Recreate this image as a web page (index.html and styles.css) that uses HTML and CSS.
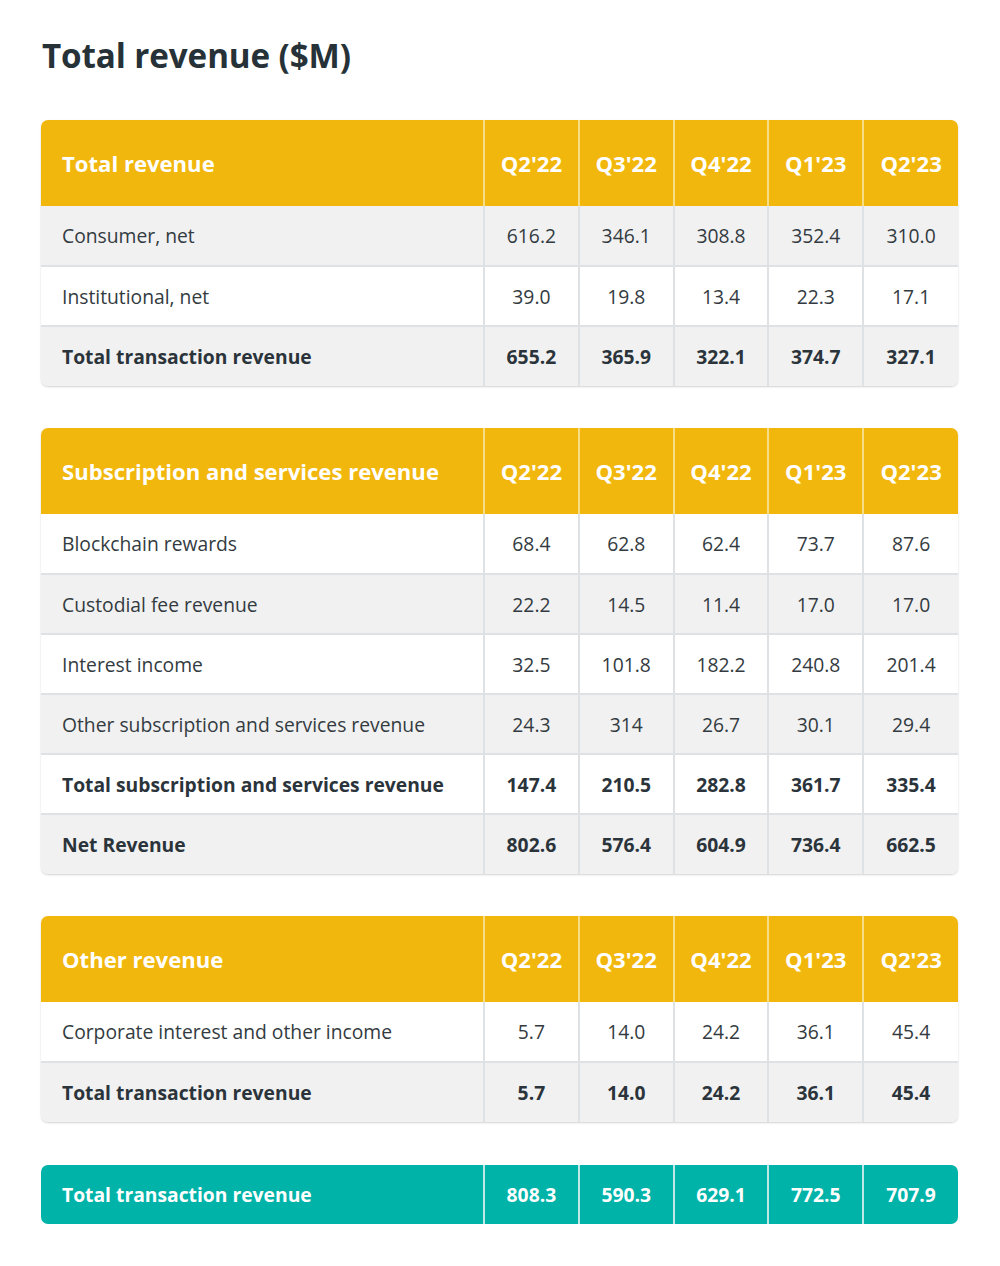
FILE: index.html
```html
<!DOCTYPE html>
<html>
<head>
<meta charset="utf-8">
<link rel="stylesheet" href="styles.css">
</head>
<body>
<div class="page">
  <h1 class="title">Total revenue ($M)</h1>

  <div class="card">
    <table class="rev">
      <colgroup><col class="c-label"><col><col><col><col><col></colgroup>
      <thead>
        <tr><th class="lbl">Total revenue</th><th>Q2'22</th><th>Q3'22</th><th>Q4'22</th><th>Q1'23</th><th>Q2'23</th></tr>
      </thead>
      <tbody>
        <tr class="gray"><td class="lbl">Consumer, net</td><td>616.2</td><td>346.1</td><td>308.8</td><td>352.4</td><td>310.0</td></tr>
        <tr><td class="lbl">Institutional, net</td><td>39.0</td><td>19.8</td><td>13.4</td><td>22.3</td><td>17.1</td></tr>
        <tr class="gray bold"><td class="lbl">Total transaction revenue</td><td>655.2</td><td>365.9</td><td>322.1</td><td>374.7</td><td>327.1</td></tr>
      </tbody>
    </table>
  </div>

  <div class="card">
    <table class="rev">
      <colgroup><col class="c-label"><col><col><col><col><col></colgroup>
      <thead>
        <tr><th class="lbl">Subscription and services revenue</th><th>Q2'22</th><th>Q3'22</th><th>Q4'22</th><th>Q1'23</th><th>Q2'23</th></tr>
      </thead>
      <tbody>
        <tr><td class="lbl">Blockchain rewards</td><td>68.4</td><td>62.8</td><td>62.4</td><td>73.7</td><td>87.6</td></tr>
        <tr class="gray"><td class="lbl">Custodial fee revenue</td><td>22.2</td><td>14.5</td><td>11.4</td><td>17.0</td><td>17.0</td></tr>
        <tr><td class="lbl">Interest income</td><td>32.5</td><td>101.8</td><td>182.2</td><td>240.8</td><td>201.4</td></tr>
        <tr class="gray"><td class="lbl">Other subscription and services revenue</td><td>24.3</td><td>314</td><td>26.7</td><td>30.1</td><td>29.4</td></tr>
        <tr class="bold"><td class="lbl">Total subscription and services revenue</td><td>147.4</td><td>210.5</td><td>282.8</td><td>361.7</td><td>335.4</td></tr>
        <tr class="gray bold"><td class="lbl">Net Revenue</td><td>802.6</td><td>576.4</td><td>604.9</td><td>736.4</td><td>662.5</td></tr>
      </tbody>
    </table>
  </div>

  <div class="card">
    <table class="rev">
      <colgroup><col class="c-label"><col><col><col><col><col></colgroup>
      <thead>
        <tr><th class="lbl">Other revenue</th><th>Q2'22</th><th>Q3'22</th><th>Q4'22</th><th>Q1'23</th><th>Q2'23</th></tr>
      </thead>
      <tbody>
        <tr><td class="lbl">Corporate interest and other income</td><td>5.7</td><td>14.0</td><td>24.2</td><td>36.1</td><td>45.4</td></tr>
        <tr class="gray bold"><td class="lbl">Total transaction revenue</td><td>5.7</td><td>14.0</td><td>24.2</td><td>36.1</td><td>45.4</td></tr>
      </tbody>
    </table>
  </div>

  <div class="card total-card">
    <table class="rev total">
      <colgroup><col class="c-label"><col><col><col><col><col></colgroup>
      <tbody>
        <tr><td class="lbl">Total transaction revenue</td><td>808.3</td><td>590.3</td><td>629.1</td><td>772.5</td><td>707.9</td></tr>
      </tbody>
    </table>
  </div>
</div>
</body>
</html>
```

FILE: styles.css
```css
* { box-sizing: border-box; }
html, body { margin: 0; padding: 0; background: #ffffff; }
body {
  font-family: "Open Sans", "Noto Sans", "Liberation Sans", sans-serif;
  color: #2b343b;
}
.page {
  padding: 34px 42px 40px 41px;
  display: flex;
  flex-direction: column;
}
.title {
  margin: 0 0 42px 1px;
  font-size: 33.2px;
  line-height: 44px;
  font-weight: 700;
  color: #263238;
  letter-spacing: -0.1px;
}
.card {
  width: 917px;
  border-radius: 7px;
  overflow: hidden;
  box-shadow: 0 1px 2px rgba(0,0,0,0.18);
  margin-bottom: 42px;
}
.rev {
  width: 100%;
  border-collapse: collapse;
  table-layout: fixed;
}
.c-label { width: 443px; }
.rev th, .rev td {
  text-align: center;
  padding: 0;
}
.rev th {
  background: #f2b70c;
  color: #ffffff;
  font-size: 22.1px;
  font-weight: 700;
  height: 86px;
  border-left: 2px solid #f7dd85;
}
.rev td {
  height: 60px;
  font-size: 19.3px;
  color: #333b41;
  border-left: 2px solid #dfe2e5;
  border-top: 2px solid #dfe2e5;
}
.rev tbody tr:first-child td { border-top: none; }
.rev .lbl {
  text-align: left;
  padding-left: 21px;
  border-left: none;
}
.rev tr.gray td { background: #f1f1f1; }
.rev tr.bold td { font-weight: 700; color: #2b343b; }
.total-card {
  margin-top: 1px;
  margin-bottom: 0;
  box-shadow: none;
}
.rev.total td {
  background: #00b3a9;
  color: #ffffff;
  font-weight: 700;
  height: 59px;
  border-left: 2px solid #bfe9e6;
}
.rev.total td.lbl { border-left: none; }
```
